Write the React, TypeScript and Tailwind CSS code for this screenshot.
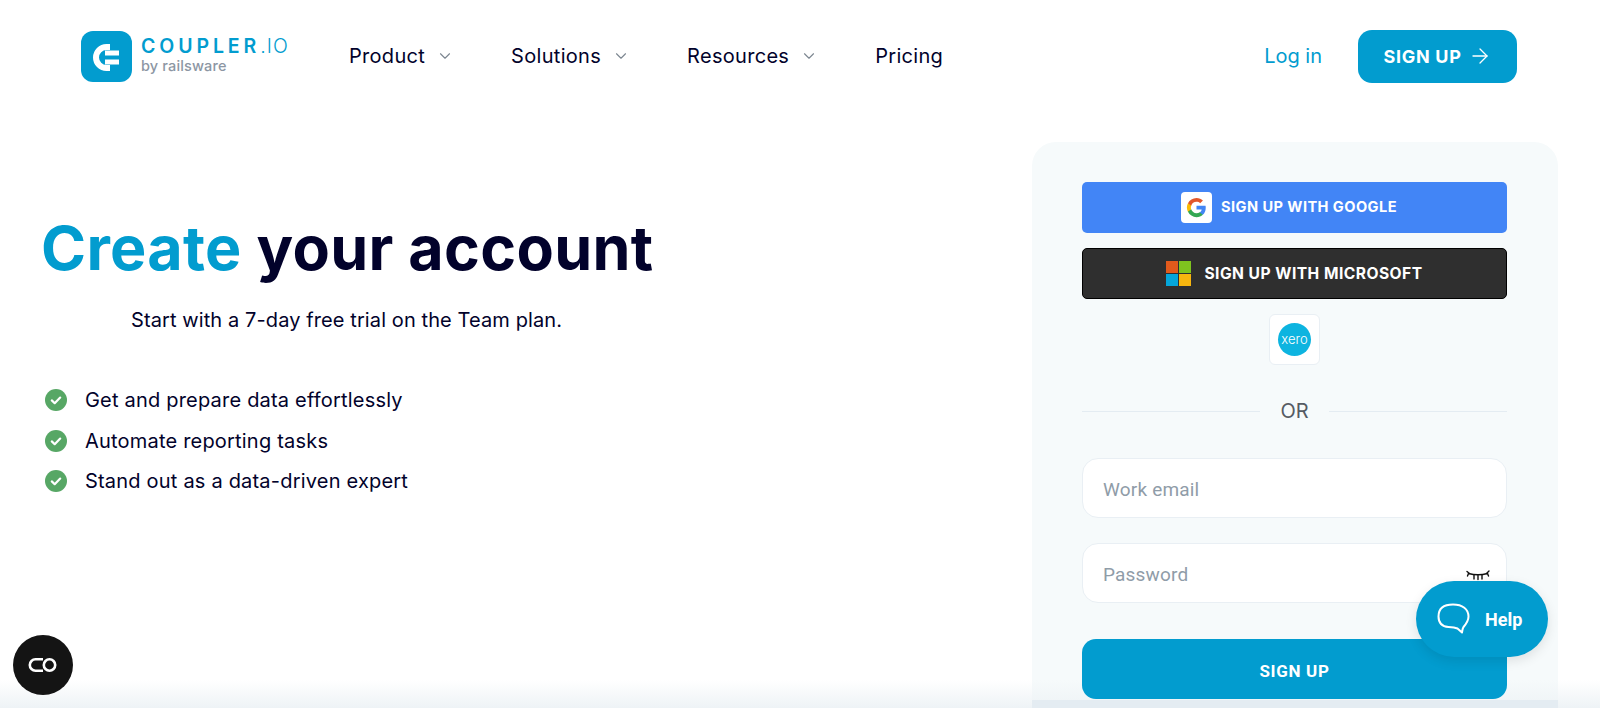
import { ArrowRight, ChevronDown } from "lucide-react"

const navItems = [
  { label: "Product", menu: true },
  { label: "Solutions", menu: true },
  { label: "Resources", menu: true },
  { label: "Pricing", menu: false },
]

const perks = [
  "Get and prepare data effortlessly",
  "Automate reporting tasks",
  "Stand out as a data-driven expert",
]

const LogoMark = () => (
  <div className="h-[51px] w-[51px] rounded-[12px] bg-[#029ccf]">
    <svg width="51" height="51" viewBox="0 0 51 51" fill="none">
      <path d="M29 16h-3.500a10.500 10.500 0 0 0 0 21H29" stroke="#fff" strokeWidth="6" />
      <path d="M24 22h14M24 31h14" stroke="#fff" strokeWidth="5" />
    </svg>
  </div>
)

const GoogleIcon = () => (
  <svg width="21" height="21" viewBox="0 0 48 48">
    <path fill="#4285F4" d="M45.100 24.500c0-1.600-.1-3.100-.4-4.500H24v8.500h11.800c-.5 2.800-2 5.100-4.400 6.700v5.600h7.100c4.200-3.800 6.600-9.500 6.600-16.300z" />
    <path fill="#34A853" d="M24 46c5.900 0 10.900-2 14.500-5.300l-7.100-5.600c-2 1.300-4.500 2.100-7.400 2.100-5.700 0-10.500-3.800-12.200-9H4.500v5.700C8.100 41.200 15.500 46 24 46z" />
    <path fill="#FBBC05" d="M11.800 28.200c-.4-1.300-.7-2.700-.7-4.200s.3-2.900.7-4.200v-5.700H4.500C3 17 2 20.400 2 24s1 7 2.500 9.900l7.300-5.700z" />
    <path fill="#E2572B" d="M24 10.800c3.200 0 6.100 1.100 8.400 3.300l6.300-6.300C34.900 4.200 29.900 2 24 2 15.500 2 8.100 6.800 4.500 14.100l7.300 5.700c1.700-5.200 6.500-9 12.200-9z" />
  </svg>
)

const MicrosoftIcon = () => (
  <div className="grid h-[25px] w-[25px] grid-cols-2 gap-[1px]">
    <div className="bg-[#e25a1c]" />
    <div className="bg-[#7fc41f]" />
    <div className="bg-[#05a6da]" />
    <div className="bg-[#f7b60f]" />
  </div>
)

const CheckBadge = () => (
  <svg width="22" height="22" viewBox="0 0 22 22" className="shrink-0">
    <circle cx="11" cy="11" r="11" fill="#57a765" />
    <path d="M6.800 11.400l2.900 2.800 5.500-5.600" fill="none" stroke="#fff" strokeWidth="2.200" strokeLinecap="round" strokeLinejoin="round" />
  </svg>
)

const ClosedEye = () => (
  <svg width="24" height="14" viewBox="0 0 24 14" fill="none" stroke="#111" strokeWidth="1.400" strokeLinecap="round">
    <path d="M2.500 4.500c5.500 1.500 13.500 1.500 19 0" />
    <path d="M1 2.500l2.500 2M23 2l-2.500 2.500M2.500 4.500L1.500 7M21.500 4.500L22.500 7M8 6v4M16 6v4M12 6.500v4" />
  </svg>
)

const ChatBubble = () => (
  <svg width="33" height="32" viewBox="0 0 33 32" fill="none" stroke="#fff" strokeWidth="2" strokeLinejoin="round">
    <path d="M16 1.500C6.500 1.500 1.500 6 1.500 13.500c0 6.500 3.500 10 10 10.500 3.500.2 6.500.5 9 1.500l4.500 4c.5-2 .2-3.500 1.500-5.500 3-3.500 5-6.500 5-10.500C31.500 6 25.500 1.500 16 1.500z" />
  </svg>
)

export default function App() {
  return (
    <div className="relative h-[708px] overflow-hidden bg-white font-['Inter',sans-serif] text-[#02022b]">
      <header className="flex h-[112px] items-center justify-between pr-[83px] pl-[81px]">
        <div className="flex items-center">
          <a className="flex items-center gap-[9px]">
            <LogoMark />
            <div className="w-[148px]">
              <div className="-mt-[3px] flex items-baseline text-[19.500px] leading-[20px] font-semibold tracking-[0.2em] whitespace-nowrap text-[#029ccf]">
                COUPLER<span className="font-light tracking-[0.06em]">.IO</span>
              </div>
              <div className="mt-[2px] text-[14.500px] leading-[16px] font-medium tracking-[0.01em] text-[#8c96a3]">by railsware</div>
            </div>
          </a>
          <nav className="ml-[60px] flex items-center text-[20px] tracking-[0.3px]">
            {navItems.map((item, i) => (
              <a key={item.label} className={i === 0 ? "flex items-center gap-[11px]" : "ml-[57px] flex items-center gap-[11px]"}>
                {item.label}
                {item.menu && <ChevronDown size={18} strokeWidth={1.5} className="text-[#7c8690]" />}
              </a>
            ))}
          </nav>
        </div>
        <div className="flex items-center gap-[36px]">
          <a className="text-[20px] text-[#029ccf]">Log in</a>
          <button className="flex h-[53px] w-[159px] items-center justify-center gap-[6px] rounded-[14px] bg-[#029ccf] text-[18px] font-bold tracking-[0.04em] text-white">
            SIGN UP
            <ArrowRight size={24} strokeWidth={1.3} />
          </button>
        </div>
      </header>

      <main className="flex items-start justify-between pt-[30px] pr-[42px] pl-[41px]">
        <section className="w-[640px] pt-[70px]">
          <h1 className="text-[61px] leading-[72px] font-bold tracking-[0.005em]">
            <span className="text-[#029ccf]">Create</span> your account
          </h1>
          <p className="mt-[21px] pl-[90px] text-[20px] leading-[30px] tracking-[0.1px]">Start with a 7-day free trial on the Team plan.</p>
          <ul className="mt-[50px] flex flex-col gap-[10.500px] pl-[4px]">
            {perks.map((perk) => (
              <li key={perk} className="flex items-center gap-[18px] text-[20px] leading-[30px] tracking-[0.2px]">
                <CheckBadge />
                {perk}
              </li>
            ))}
          </ul>
        </section>

        <section className="h-[620px] w-[526px] rounded-[24px] bg-[#f6fafb] pt-[40px] pr-[51px] pl-[50px]">
          <button className="flex h-[51px] w-full items-center justify-center gap-[9px] rounded-[5px] bg-[#4285f6] pr-[11px] text-[14.600px] font-bold tracking-[0.03em] text-white">
            <span className="flex h-[31px] w-[31px] items-center justify-center rounded-[4px] bg-white">
              <GoogleIcon />
            </span>
            SIGN UP WITH GOOGLE
          </button>
          <button className="mt-[15px] flex h-[51px] w-full items-center justify-center gap-[13px] rounded-[5px] border border-black bg-[#2f2f2f] text-[15.600px] font-bold tracking-[0.03em] text-white">
            <MicrosoftIcon />
            SIGN UP WITH MICROSOFT
          </button>
          <div className="mt-[15px] flex justify-center">
            <button className="flex h-[51px] w-[51px] items-center justify-center rounded-[6px] border border-[#e9eff4] bg-white">
              <span className="flex h-[33px] w-[33px] items-center justify-center rounded-full bg-[#0db4e0] text-[13px] leading-none font-light text-white">xero</span>
            </button>
          </div>
          <div className="mt-[32px] flex items-center gap-[20px] text-[20px] leading-[28px] text-[#555b63]">
            <div className="h-px flex-1 bg-[#e4ecf2]" />
            OR
            <div className="h-px flex-1 bg-[#e4ecf2]" />
          </div>
          <div className="mt-[33px] flex h-[60px] items-center rounded-[16px] border border-[#e9eff4] bg-white px-[20px] font-['Roboto',sans-serif] text-[19px] tracking-[0.01em] text-[#8f9ca8]">
            <span className="pt-[4px]">Work email</span>
          </div>
          <div className="mt-[25px] flex h-[60px] items-center justify-between rounded-[16px] border border-[#e9eff4] bg-white pr-[16px] pl-[20px] font-['Roboto',sans-serif] text-[19px] tracking-[0.01em] text-[#8f9ca8]">
            <span className="pt-[4px]">Password</span>
            <span className="mt-[6px]">
              <ClosedEye />
            </span>
          </div>
          <button className="relative z-20 mt-[36px] h-[60px] w-full rounded-[14px] bg-[#029ccf] pt-[5px] font-['Roboto',sans-serif] text-[17px] font-bold tracking-[0.04em] text-white">SIGN UP</button>
        </section>
      </main>

      {/* fade along the page bottom, darker band under the form card */}
      <div className="pointer-events-none absolute inset-x-0 bottom-0 z-10 h-[28px] bg-gradient-to-b from-transparent to-[#eef3f6]" />
      <div className="pointer-events-none absolute right-[42px] bottom-0 z-10 h-[8px] w-[526px] bg-[#e4ecf2]" />

      <div className="absolute top-[635px] left-[13px] z-30 flex h-[60px] w-[60px] items-center justify-center rounded-full bg-[#141414]">
        <svg width="32" height="16" viewBox="0 0 32 16" fill="none" stroke="#fff" strokeWidth="2.600">
          <path d="M16 2.300H8.500a5.700 5.700 0 0 0 0 11.400H16" />
          <circle cx="22.500" cy="8" r="5.700" />
        </svg>
      </div>

      <button className="absolute top-[581px] left-[1416px] z-30 flex h-[76px] w-[132px] items-center gap-[15px] rounded-[40px] bg-[#029ccf] pl-[21px] font-['Roboto',sans-serif] text-[18px] font-bold text-white shadow-[0_4px_12px_rgba(0,0,0,0.1)]">
        <ChatBubble />
        Help
      </button>
    </div>
  )
}
